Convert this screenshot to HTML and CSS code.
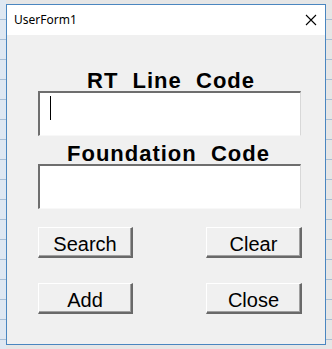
FILE: index.html
```html
<!DOCTYPE html>
<html>
<head>
<meta charset="utf-8">
<link rel="stylesheet" href="styles.css">
</head>
<body>
<div class="window">
  <div class="titlebar">
    <span class="title">UserForm1</span>
    <svg class="close" width="12" height="12" viewBox="0 0 12 12"><path d="M1 1 L11 11 M11 1 L1 11" stroke="#000" stroke-width="1.1" fill="none"/></svg>
  </div>
  <div class="content">
    <div class="label l1">RT  Line  Code</div>
    <div class="textbox"><span class="caret"></span></div>
    <div class="label l2">Foundation  Code</div>
    <div class="textbox"></div>
    <div class="row r1">
      <div class="btn b-left">Search</div>
      <div class="btn b-right">Clear</div>
    </div>
    <div class="row r2">
      <div class="btn b-left">Add</div>
      <div class="btn b-right">Close</div>
    </div>
  </div>
</div>
</body>
</html>
```
FILE: styles.css
```css
html, body {
  margin: 0;
  padding: 0;
}
body {
  width: 332px;
  height: 349px;
  overflow: hidden;
  background-color: #f4f6f9;
  background-image:
    repeating-linear-gradient(to bottom, transparent 0, transparent 19px, #a9bfd6 19px, #a9bfd6 20px),
    linear-gradient(to right, #dfe8f2 0, #dfe8f2 6px, #e6e6e6 6px);
  padding-top: 4px;
  padding-left: 6px;
  box-sizing: border-box;
}
.window {
  width: 320px;
  height: 341px;
  box-sizing: border-box;
  border: 1px solid #4a86c0;
  background: #f0f0f0;
  display: flex;
  flex-direction: column;
}
.titlebar {
  height: 30px;
  background: #ffffff;
  display: flex;
  align-items: center;
  justify-content: space-between;
  padding: 0 8px 0 7px;
  flex: none;
}
.title {
  font-family: "Noto Sans", "DejaVu Sans", sans-serif;
  font-size: 12px;
  color: #000;
  margin-top: -2px;
}
.close {
  display: block;
  margin-top: -1px;
}
.content {
  padding-left: 31px;
  display: flex;
  flex-direction: column;
}
.label {
  font-family: "Liberation Sans", Arial, sans-serif;
  font-weight: bold;
  font-size: 22px;
  line-height: 20px;
  height: 20px;
  white-space: pre;
  color: #000;
  letter-spacing: 1px;
}
.l1 {
  margin-top: 36px;
  padding-left: 49px;
}
.l2 {
  margin-top: 8px;
  padding-left: 29px;
}
.textbox {
  width: 263px;
  height: 45px;
  box-sizing: border-box;
  background: #ffffff;
  border-top: 2px solid #6e6e6e;
  border-left: 2px solid #6e6e6e;
  border-right: 1px solid #d8d8d8;
  border-bottom: 1px solid #f8f8f8;
  position: relative;
}
.caret {
  position: absolute;
  left: 10px;
  top: 3px;
  width: 1px;
  height: 24px;
  background: #000;
}
.row {
  display: flex;
  width: 264px;
  justify-content: space-between;
}
.r1 { margin-top: 18px; }
.r2 { margin-top: 25px; }
.btn {
  height: 31px;
  box-sizing: border-box;
  background: #f0f0f0;
  border-top: 1px solid #ffffff;
  border-left: 1px solid #ffffff;
  border-right: 2px solid #696969;
  border-bottom: 2px solid #696969;
  box-shadow: inset -1px -1px 0 #a0a0a0;
  font-family: "Liberation Sans", Arial, sans-serif;
  font-size: 20px;
  line-height: 23px;
  padding-top: 5px;
  text-align: center;
  color: #000;
}
.b-left { width: 95px; }
.b-right { width: 96px; }
```
